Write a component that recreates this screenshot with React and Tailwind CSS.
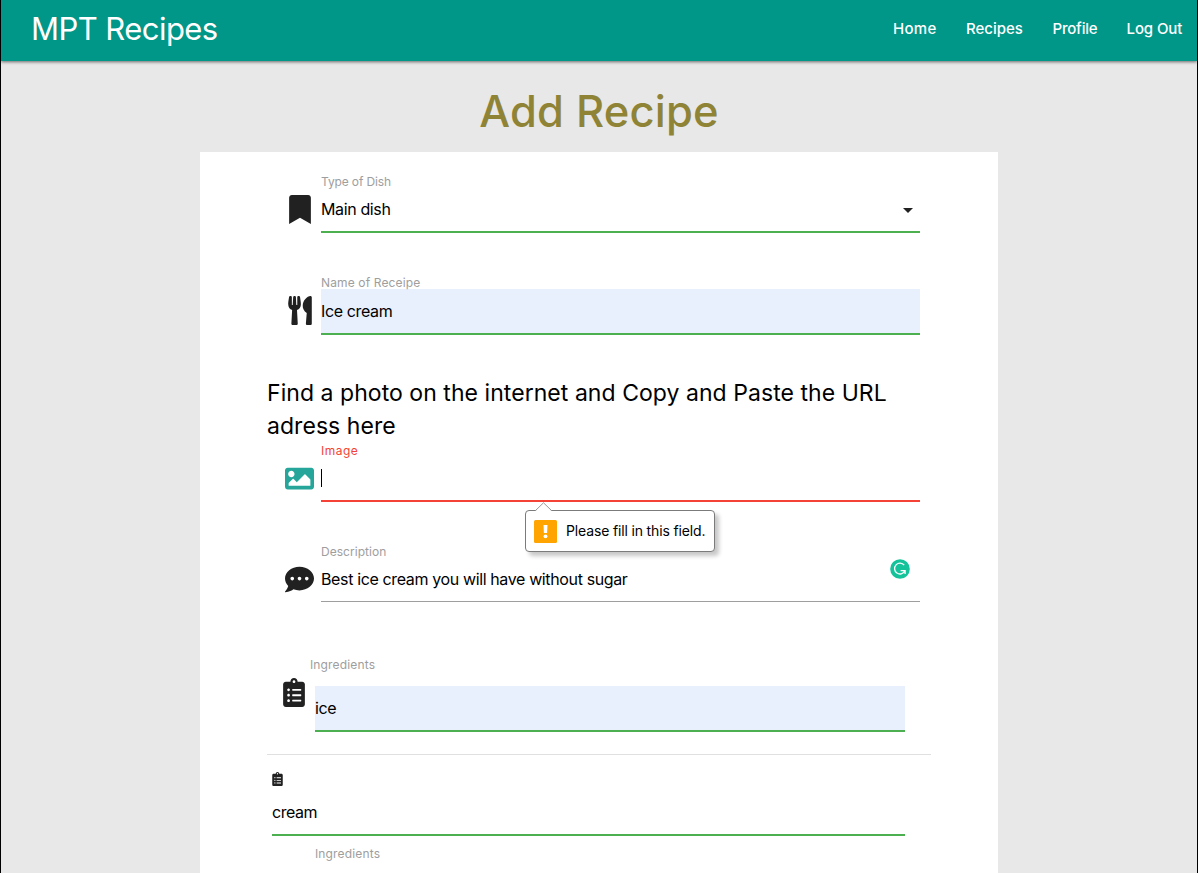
import { FaBookmark, FaUtensils, FaImage, FaCommentDots, FaClipboardList } from "react-icons/fa";

const links = [
  { name: "Home", cls: "w-[43px] tracking-[0.3px]" },
  { name: "Recipes", cls: "w-[56.5px] tracking-[0px]" },
  { name: "Profile", cls: "w-[44px] tracking-[-0.2px]" },
  { name: "Log Out", cls: "w-[56px] tracking-[-0.1px]" },
];

function Label({ children, className }) {
  return (
    <div className={`relative z-10 h-[14px] text-[12px] whitespace-nowrap ${className}`}>
      <span>{children}</span>
    </div>
  );
}

function Field({ icon, iconClass = "pl-[11px] pt-[21px] text-[#212121]", label, labelClass, boxClass, children }) {
  return (
    <div className="flex">
      <div className={`flex w-[54px] justify-center ${iconClass}`}>{icon}</div>
      <div className="w-[599px]">
        <Label className={labelClass}>{label}</Label>
        <div className={`flex items-center whitespace-nowrap text-[16px] tracking-[-0.37px] ${boxClass}`}>{children}</div>
      </div>
    </div>
  );
}

function Tooltip() {
  return (
    <div className="absolute left-[204px] top-[52px] z-20 flex h-[42px] w-[190px] items-center gap-[9px] rounded-[4px] border border-[#7b7b7b] bg-white pl-[8px] shadow-[4px_4px_4px_rgba(0,0,0,0.22)]">
      <svg className="absolute left-[9px] top-[-9px]" width="18" height="10" viewBox="0 0 18 10">
        <path d="M0.5 9 L8.5 1 L16.5 9 V10 H0.5 Z" fill="#fff" />
        <path d="M0.5 8.5 L8.5 0.8 L16.5 8.5" fill="none" stroke="#999" />
      </svg>
      <svg width="23" height="23" viewBox="0 0 23 23">
        <rect width="23" height="23" rx="1.5" fill="#ffa400" />
        <path d="M9.5 5h4l-.4 8h-3.2z" fill="#fff" />
        <circle cx="11.5" cy="16.3" r="1.9" fill="#fff" />
      </svg>
      <span className="whitespace-nowrap text-[14px] leading-5 tracking-[-0.15px]">Please fill in this field.</span>
    </div>
  );
}

export default function App() {
  return (
    <div className="h-[873px] overflow-hidden border-x border-black bg-[#e8e8e8] font-['Inter',sans-serif] text-black">
      <header className="flex h-[61px] items-center justify-between bg-[#009688] pl-[30px] pr-[14.5px] pb-[4px] text-white shadow-[0_1px_3px_rgba(0,0,0,0.55)]">
        <div className="whitespace-nowrap pt-px text-[31px] leading-9 tracking-[-0.55px]">MPT Recipes</div>
        <nav className="flex gap-[30px] pt-[2px] text-[15px] font-medium">
          {links.map((l) => (
            <a key={l.name} className={`whitespace-nowrap ${l.cls}`}>{l.name}</a>
          ))}
        </nav>
      </header>

      <h1 className="h-[91px] pt-[25px] text-center text-[43.5px] font-medium leading-[50px] tracking-[0.2px] text-[#8f8336]">Add Recipe</h1>

      <main className="mx-auto h-[721px] w-[798px] bg-white px-[67px] pt-[22px]">
        <Field
          icon={<FaBookmark className="h-[29px] w-[22px]" />}
          label="Type of Dish"
          labelClass="leading-4 text-[#9e9e9e] tracking-[-0.12px]"
          boxClass="h-[45px] border-b-2 border-[#4caf50] justify-between pr-[7px]"
        >
          <span className="pb-[2px]">Main dish</span>
          <span className="mt-[1px] h-0 w-0 border-x-[5px] border-t-[5px] border-x-transparent border-t-[#212121]" />
        </Field>

        <div className="pt-[42px]">
          <Field
            icon={<FaUtensils className="h-[29px] w-[24px]" />}
            label="Name of Receipe"
            labelClass="leading-4 text-[#9e9e9e] tracking-[0.13px]"
            boxClass="h-[46px] border-b-2 border-[#4caf50] bg-[#e8f0fe]"
          >
            <span>Ice cream</span>
          </Field>
        </div>

        <p className="mt-[41px] h-[68px] whitespace-nowrap pt-px text-[23px] leading-[33px] tracking-[0.05px]">
          <span>Find a photo on the internet and Copy and Paste the URL</span>
          <br />
          <span>adress here</span>
        </p>

        <Field
          icon={<FaImage className="h-[29px] w-[29px]" />}
          iconClass="pl-[10px] pt-[20px] text-[#26a69a]"
          label="Image"
          labelClass="leading-[14px] text-[#f44336] tracking-[0.5px]"
          boxClass="relative h-[44px] border-b-2 border-[#f44336]"
        >
          <span className="mb-[2px] h-[18px] w-px bg-black" />
          <Tooltip />
        </Field>

        <div className="pt-[43px]">
          <Field
            icon={<FaCommentDots className="h-[29px] w-[29px]" />}
            iconClass="pl-[10px] pt-[20px] text-[#212121]"
            label="Description"
            labelClass="leading-[14px] text-[#9e9e9e] tracking-[0.03px]"
            boxClass="h-[43px] border-b border-[#9e9e9e] justify-between pr-[10px]"
          >
            <span className="pb-[2px]">Best ice cream you will have without sugar</span>
            <svg className="mb-[22px]" width="20" height="20" viewBox="0 0 20 20">
              <circle cx="10" cy="10" r="9.8" fill="#15c39a" />
              <path d="M14.2 6.2A5.4 5.4 0 1 0 14.8 12M10.6 11.6H15.1V15" fill="none" stroke="#fff" strokeWidth="1.3" />
            </svg>
          </Field>
        </div>

        <section className="mt-[56px] flex h-[97px] border-b border-[#e0e0e0] pl-[15.5px]">
          <FaClipboardList className="mt-[20px] h-[29px] w-[22px] text-[#212121]" />
          <div className="ml-[10.5px] w-[590px]">
            <div className="-ml-[5px]">
              <Label className="leading-[14px] text-[#9e9e9e] tracking-[0.15px]">Ingredients</Label>
            </div>
            <div className="mt-[14px] flex h-[46px] items-center border-b-2 border-[#4caf50] bg-[#e8f0fe] text-[16px] tracking-[-0.37px]">
              <span>ice</span>
            </div>
          </div>
        </section>

        <section className="ml-[5px] w-[633px] pt-[17px]">
          <FaClipboardList className="h-[14px] w-[11px] text-[#212121]" />
          <div className="mt-[4px] flex h-[46px] items-center border-b-2 border-[#4caf50] text-[16px] tracking-[-0.45px]">
            <span>cream</span>
          </div>
          <div className="ml-[43px] mt-[11px]">
            <Label className="leading-[14px] text-[#9e9e9e] tracking-[0.15px]">Ingredients</Label>
          </div>
        </section>
      </main>
    </div>
  );
}
